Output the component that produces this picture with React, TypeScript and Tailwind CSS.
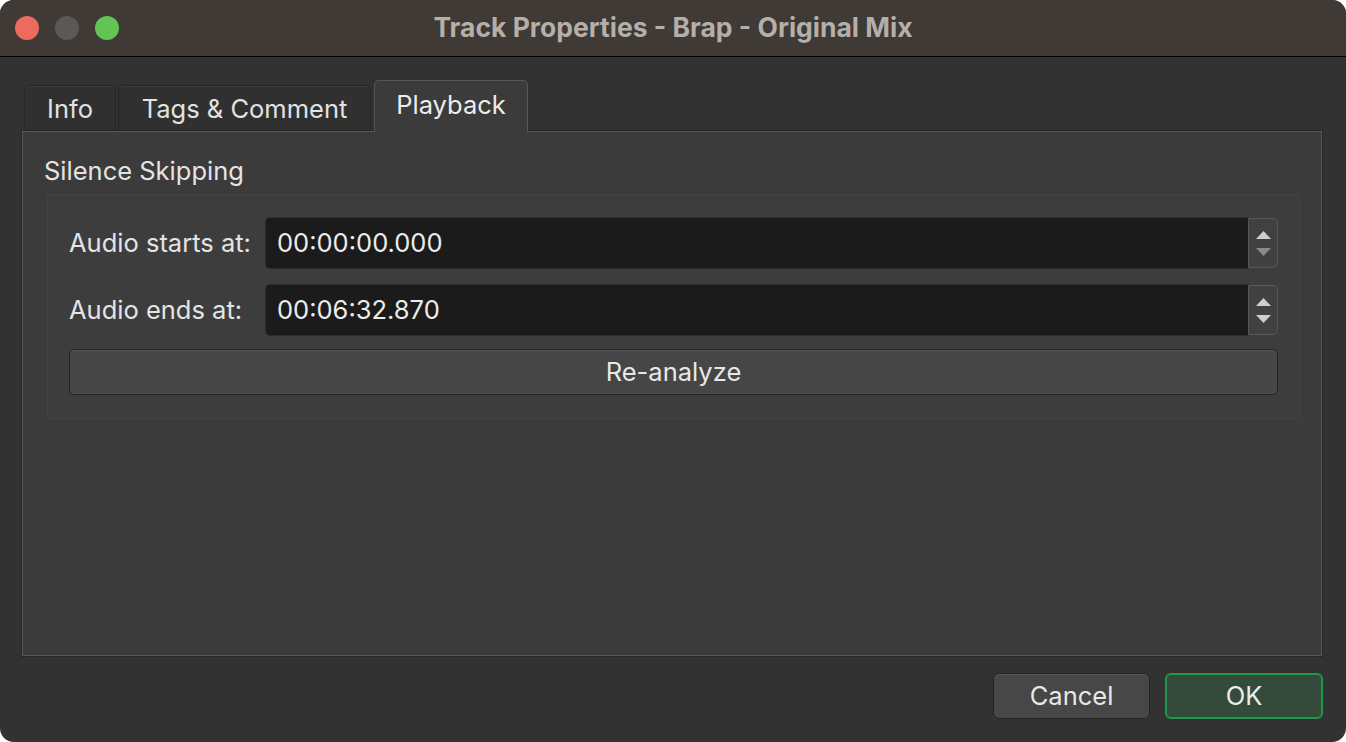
const font = { fontFamily: "Inter, 'Noto Sans', 'Liberation Sans', sans-serif" };

function Spinner({ upDim = false, downDim = false }: { upDim?: boolean; downDim?: boolean }) {
  return (
    <div className="flex h-full w-[30px] flex-col items-center justify-center gap-[9px] rounded-r-[5px] border border-[#575757] bg-[#414141]">
      <svg width="15" height="8" viewBox="0 0 15 8">
        <path d="M7.5 0 L15 8 L0 8 Z" fill={upDim ? "#8a8a8a" : "#cfcfcf"} />
      </svg>
      <svg width="15" height="8" viewBox="0 0 15 8">
        <path d="M0 0 L15 0 L7.5 8 Z" fill={downDim ? "#8a8a8a" : "#cfcfcf"} />
      </svg>
    </div>
  );
}

function TimeRow({ label, value, downDim }: { label: string; value: string; downDim?: boolean }) {
  return (
    <div className="flex h-[50px] items-center">
      <div className="w-[197px] text-[25.5px] text-[#e4e4e4]">{label}</div>
      <div className="flex h-full flex-1 items-stretch">
        <div className="flex flex-1 items-center rounded-l-[4px] bg-[#1b1b1b] pl-[11px] text-[25.5px] text-[#ececec] shadow-[0_0_0_1px_#2c2c2c]">
          {value}
        </div>
        <Spinner downDim={downDim} />
      </div>
    </div>
  );
}

function Tab({ label, active = false, w }: { label: string; active?: boolean; w: string }) {
  if (active) {
    return (
      <div
        className={`relative z-10 -mb-px ml-px flex h-[52px] items-center justify-center rounded-t-[5px] border border-b-0 border-[#575757] bg-[#3b3b3b] pb-[2px] text-[25.5px] text-[#ececec] ${w}`}
      >
        {label}
      </div>
    );
  }
  return (
    <div
      className={`flex h-[46px] items-center justify-center rounded-t-[5px] border border-b-0 border-[#262626] bg-[#303030] pt-[2px] text-[25.5px] text-[#e2e2e2] shadow-[inset_0_1px_0_#3c3c3c] ${w}`}
    >
      {label}
    </div>
  );
}

export default function App() {
  return (
    <div className="h-[742px] w-[1346px] bg-white" style={font}>
      <div className="flex h-full w-full flex-col overflow-hidden rounded-[14px] bg-[#323232]">
        {/* title bar */}
        <div className="relative flex h-[57px] shrink-0 items-center justify-center border-b border-black bg-[#3f3a35]">
          <div className="absolute left-[15px] top-[16px] flex gap-[16px]">
            <span className="h-[24px] w-[24px] rounded-full bg-[#ec6a5e]" />
            <span className="h-[24px] w-[24px] rounded-full bg-[#5c5855]" />
            <span className="h-[24px] w-[24px] rounded-full bg-[#61c454]" />
          </div>
          <div className="text-[26.5px] font-bold text-[#b4afa9]">
            Track Properties - Brap - Original Mix
          </div>
        </div>

        {/* body */}
        <div className="flex flex-1 flex-col pl-[22px] pr-[24px] pt-[23px]">
          <div className="ml-[2px] flex items-end gap-[2px]">
            <Tab label="Info" w="w-[92px]" />
            <Tab label="Tags & Comment" w="w-[253px]" />
            <Tab label="Playback" active w="w-[154px]" />
          </div>

          <div className="h-[525px] border border-[#575757] bg-[#3b3b3b] px-[21px] pt-[24px] shadow-[0_0_0_1px_#262626]">
            <div className="text-[25.5px] leading-[30px] text-[#e4e4e4]">Silence Skipping</div>
            <div className="ml-[3px] mt-[8px] flex flex-col gap-[17px] rounded-[3px] border border-[#434343] bg-[#3d3d3d] px-[21px] pb-[23px] pt-[23px]">
              <TimeRow label="Audio starts at:" value="00:00:00.000" downDim />
              <TimeRow label="Audio ends at:" value="00:06:32.870" />
              <div className="-mt-[3px] flex h-[46px] items-center justify-center rounded-[5px] border border-[#232323] bg-[#464646] text-[25.5px] text-[#e8e8e8] shadow-[inset_0_1px_0_#555,inset_0_-1px_0_#4f4f4f]">
                Re-analyze
              </div>
            </div>
          </div>

          <div className="mt-[17px] flex justify-end gap-[15px]">
            <div className="flex h-[46px] w-[157px] items-center justify-center rounded-[6px] border border-[#232323] bg-[#474747] text-[25.5px] text-[#e8e8e8] shadow-[inset_0_1px_0_#555]">
              Cancel
            </div>
            <div className="-mr-px flex h-[46px] w-[158px] items-center justify-center rounded-[6px] border-2 border-[#1f9a4c] bg-[#344a3b] text-[25.5px] text-[#e8efe9]">
              OK
            </div>
          </div>
        </div>
      </div>
    </div>
  );
}
